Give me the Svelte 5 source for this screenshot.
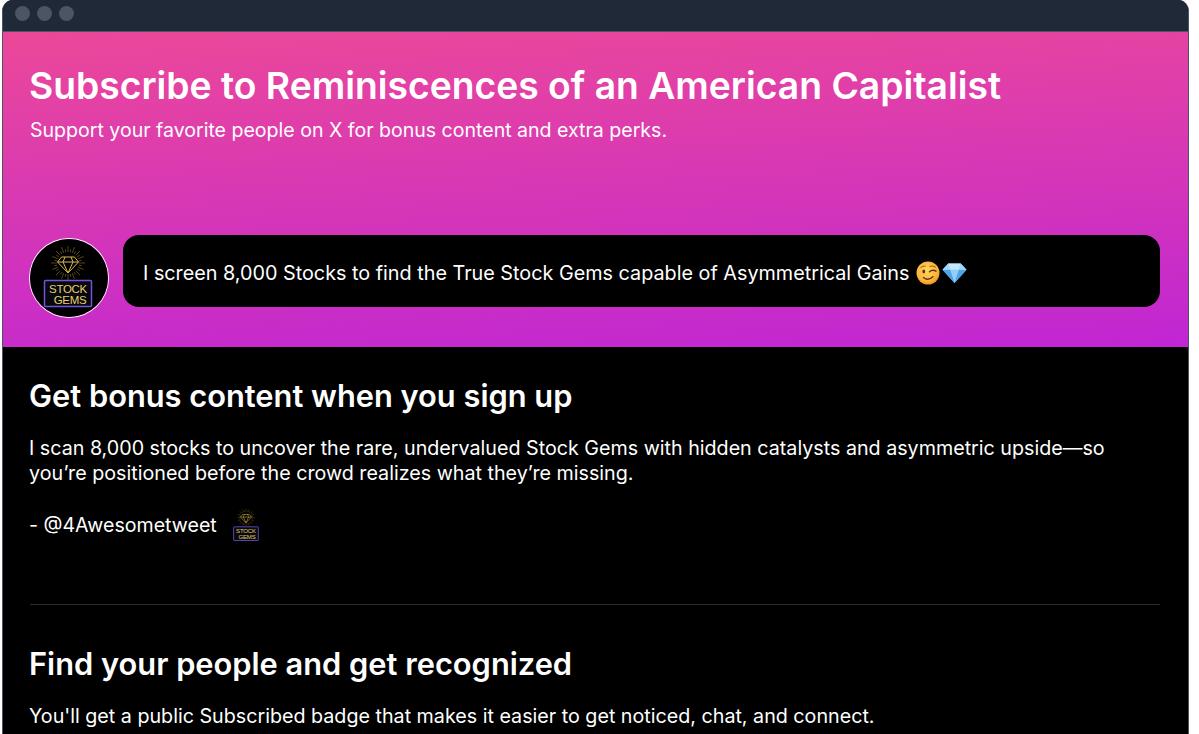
<script>
  const dots = [0, 1, 2];
  const rays = Array.from({ length: 32 }, (_, i) => (i * 360) / 32);
</script>

{#snippet logo()}
  <svg viewBox="0 0 78 78" class="logo-svg" aria-hidden="true">
    <rect width="78" height="78" fill="#000" />
    <g transform="translate(38 24)" stroke="#c9a83f" stroke-width=".5">
      {#each rays as a, i}
        <line x1="0" y1="-11" x2="0" y2={i % 2 ? -14 : -17} transform="rotate({a})" opacity=".8" />
      {/each}
    </g>
    <path d="M31.500 18h13l4 5-10.500 11-10.500-11z M27.500 23h21 M33 23l5 11 5-11 M35 18l-2 5 M41 18l2 5" fill="none" stroke="#d9b94f" stroke-width="1" />
    <rect x="14.500" y="41.500" width="47" height="26" rx="1" fill="#08080f" stroke="#6f55dc" stroke-width="1.500" />
    <text x="38" y="54" text-anchor="middle" class="logo-text">STOCK</text>
    <text x="40" y="65" text-anchor="middle" class="logo-text">GEMS</text>
  </svg>
{/snippet}

<div class="window">
  <div class="titlebar">
    {#each dots as d (d)}
      <span class="dot"></span>
    {/each}
  </div>

  <header class="hero">
    <h1>Subscribe to Reminiscences of an American Capitalist</h1>
    <p class="sub">Support your favorite people on X for bonus content and extra perks.</p>
    <div class="bio-row">
      <div class="avatar">{@render logo()}</div>
      <div class="bubble">
        <span>I screen 8,000 Stocks to find the True Stock Gems capable of Asymmetrical Gains</span>
        <svg class="emoji wink" viewBox="0 0 24 24" aria-hidden="true">
          <defs>
            <radialGradient id="face" cx="45%" cy="40%" r="65%">
              <stop offset="0" stop-color="#ffd75e" />
              <stop offset=".7" stop-color="#fbb437" />
              <stop offset="1" stop-color="#ee8a1f" />
            </radialGradient>
          </defs>
          <circle cx="12" cy="12" r="11.500" fill="url(#face)" />
          <ellipse cx="7.800" cy="10.500" rx="1.400" ry="2.100" fill="#5b3413" />
          <path d="M13.500 10.800q3-2.800 6.500-.6" fill="none" stroke="#5b3413" stroke-width="1.400" stroke-linecap="round" />
          <path d="M4.800 6.500q2-1.800 4.500-1.500M14 5.300q3-1 5.500.7" fill="none" stroke="#9a5a1a" stroke-width="1" stroke-linecap="round" />
          <path d="M7.500 16.500q4.500 3.800 9.500-.8" fill="none" stroke="#5b3413" stroke-width="1.400" stroke-linecap="round" />
        </svg>
        <svg class="emoji gem" viewBox="0 0 26 22" aria-hidden="true">
          <path d="M6.500 1h13L25.500 7.500 13 21.500.5 7.500z" fill="#7cc4f2" />
          <path d="M.5 7.500h25L13 21.500z" fill="#4ea4e6" />
          <path d="M8.500 7.500h9L13 21.500z" fill="#8fd0f8" />
          <path d="M6.500 1h13l-2 6.500h-9z" fill="#c4e8fc" />
          <path d="M6.500 1l2 6.500H.5zM19.500 1l-2 6.500h8z" fill="#a2d9f8" />
        </svg>
      </div>
    </div>
  </header>

  <main class="content">
    <section class="block">
      <h2>Get bonus content when you sign up</h2>
      <p>I scan 8,000 stocks to uncover the rare, undervalued Stock Gems with hidden catalysts and asymmetric upside—so you’re positioned before the crowd realizes what they’re missing.</p>
      <p class="sign">
        <span>- @4Awesometweet</span>
        <span class="mini">{@render logo()}</span>
      </p>
    </section>
    <hr />
    <section class="block">
      <h2>Find your people and get recognized</h2>
      <p>You'll get a public Subscribed badge that makes it easier to get noticed, chat, and connect.</p>
    </section>
  </main>
</div>

<style>
  :global(body) {
    margin: 0;
    background: #fff;
    overflow: hidden;
  }

  .window {
    box-sizing: border-box;
    width: 1187px;
    margin-left: 2px;
    height: 734px;
    overflow: hidden;
    background: #000;
    border: solid #4b5563;
    border-width: 0 1px;
    border-radius: 11px 11px 0 0;
    font-family: Inter, "Liberation Sans", sans-serif;
    color: #fff;
  }

  .titlebar {
    height: 32px;
    box-sizing: border-box;
    padding-left: 12px;
    padding-bottom: 5px;
    display: flex;
    align-items: center;
    gap: 7px;
    background: #1f2937;
    border-bottom: 1px solid #4b5563;
  }

  .dot {
    width: 15px;
    height: 15px;
    border-radius: 50%;
    background: #4b5563;
  }

  .hero {
    box-sizing: border-box;
    height: 315px;
    padding: 32px 28px 0 27px;
    background: linear-gradient(177deg, #ec4899 0%, #c026d3 100%);
  }

  h1 {
    margin: 0 0 0 -1px;
    font-size: 37.260px;
    line-height: 44px;
    font-weight: 600;
  }

  .sub {
    margin: 9px 0 0 0;
    font-size: 19.560px;
    line-height: 26px;
  }

  .bio-row {
    margin-top: 92px;
    display: flex;
    align-items: flex-start;
    gap: 15px;
  }

  .avatar {
    flex: none;
    width: 78px;
    height: 78px;
    margin-top: 4px;
    border-radius: 50%;
    overflow: hidden;
    box-shadow: 0 0 0 1px #fff;
  }

  .logo-svg {
    display: block;
    width: 100%;
    height: 100%;
  }

  .logo-text {
    font-family: "Liberation Sans", sans-serif;
    font-size: 11.500px;
    letter-spacing: -0.3px;
    fill: #e6cf6a;
  }

  .bubble {
    flex: 1;
    height: 72px;
    box-sizing: border-box;
    padding: 4px 20px 0;
    display: flex;
    align-items: center;
    background: #000;
    border-radius: 16px;
    font-size: 19.800px;
  }

  .emoji {
    flex: none;
  }

  .wink {
    width: 24px;
    height: 24px;
    margin-left: 7px;
  }

  .gem {
    width: 25px;
    height: 22px;
    margin-left: 2px;
  }

  .content {
    padding: 31px 28px 0 27px;
  }

  .block h2,
  .block p {
    margin-left: -1px;
  }

  .block p {
    margin-top: 0;
    margin-bottom: 0;
    font-size: 19.700px;
    line-height: 25px;
  }

  h2 {
    margin: 0 0 22px;
    font-size: 30.800px;
    line-height: 36px;
    font-weight: 600;
  }

  .block p.sign {
    margin-top: 27px;
    display: flex;
    align-items: center;
    gap: 9px;
    height: 25px;
    font-size: 19.600px;
  }

  .mini {
    width: 41px;
    height: 41px;
    flex: none;
    display: block;
  }

  hr {
    margin: 66px 0 41px;
    border: 0;
    border-top: 1px solid #262a36;
  }
</style>
